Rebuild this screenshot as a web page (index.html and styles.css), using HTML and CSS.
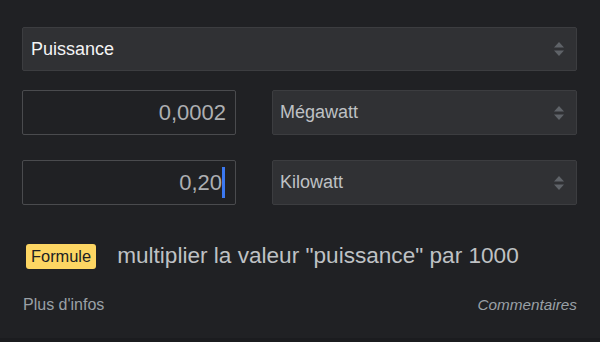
FILE: index.html
```html
<!DOCTYPE html>
<html lang="fr">
<head>
  <meta charset="UTF-8" />
  <meta name="viewport" content="width=device-width, initial-scale=1" />
  <title>Convertisseur - Puissance</title>
  <link rel="stylesheet" href="styles.css">
</head>
<body>
  <main class="converter">
    <div class="select select-main">
      <span>Puissance</span>
      <svg class="arrows" width="10" height="14" viewBox="0 0 10 14" aria-hidden="true">
        <path d="M5 0 L10 5.5 H0 Z M0 8.5 H10 L5 14 Z" fill="#5f6368" />
      </svg>
    </div>

    <div class="unit-row first">
      <div class="value-box">0,0002</div>
      <div class="select select-unit">
        <span>Mégawatt</span>
        <svg class="arrows" width="10" height="14" viewBox="0 0 10 14" aria-hidden="true">
          <path d="M5 0 L10 5.5 H0 Z M0 8.5 H10 L5 14 Z" fill="#5f6368" />
        </svg>
      </div>
    </div>

    <div class="unit-row second">
      <div class="value-box active">0,20<span class="caret"></span></div>
      <div class="select select-unit">
        <span>Kilowatt</span>
        <svg class="arrows" width="10" height="14" viewBox="0 0 10 14" aria-hidden="true">
          <path d="M5 0 L10 5.5 H0 Z M0 8.5 H10 L5 14 Z" fill="#5f6368" />
        </svg>
      </div>
    </div>

    <div class="formula">
      <span class="badge">Formule</span>
      <span class="formula-text">multiplier la valeur "puissance" par 1000</span>
    </div>

    <div class="footer">
      <a href="#" class="more">Plus d'infos</a>
      <a href="#" class="feedback">Commentaires</a>
    </div>
  </main>
</body>
</html>
```

FILE: styles.css
```css
body {
  margin: 0;
  background-color: #202124;
  font-family: "Liberation Sans", Arial, sans-serif;
  color: #e8eaed;
  height: 342px;
  overflow: hidden;
}
.converter {
  padding: 27px 23px 0 22px;
  height: 311px;
  border-bottom: 4px solid #1b1c1f;
}
.select {
  display: flex;
  align-items: center;
  justify-content: space-between;
  box-sizing: border-box;
  background-color: #303134;
  border: 1px solid #3c3d40;
  border-radius: 2px;
}
.select-main {
  height: 44px;
  padding: 0 12px 0 8px;
  font-size: 18px;
  color: #f4f4f5;
}
.select-unit {
  height: 45px;
  padding: 0 12px 0 7px;
  font-size: 18px;
  color: #bfc1c4;
}
.arrows {
  display: block;
}
.unit-row {
  display: grid;
  grid-template-columns: 214px 1fr;
  gap: 36px;
}
.unit-row.first {
  margin-top: 19px;
}
.unit-row.second {
  margin-top: 25px;
}
.value-box {
  height: 45px;
  box-sizing: border-box;
  border: 1px solid #4a4b4e;
  border-radius: 2px;
  display: flex;
  align-items: center;
  justify-content: flex-end;
  padding-right: 9px;
  font-size: 22px;
  color: #adafb2;
}
.value-box.active {
  padding-right: 10px;
}
.caret {
  display: inline-block;
  width: 3px;
  height: 31px;
  background-color: #3b78f0;
}
.formula {
  display: flex;
  align-items: center;
  margin-top: 38px;
  margin-left: 4px;
}
.badge {
  background-color: #fdd663;
  color: #202124;
  font-size: 16.4px;
  padding: 4px 5px;
  border-radius: 3px;
  line-height: 17px;
}
.formula-text {
  margin-left: 21px;
  font-size: 22.6px;
  color: #bfc1c4;
}
.footer {
  display: flex;
  justify-content: space-between;
  align-items: center;
  margin-top: 27px;
}
.footer a {
  text-decoration: none;
  color: #9aa0a6;
}
.more {
  font-size: 16px;
  margin-left: 1px;
}
.feedback {
  font-size: 15.3px;
  font-style: italic;
}
```
